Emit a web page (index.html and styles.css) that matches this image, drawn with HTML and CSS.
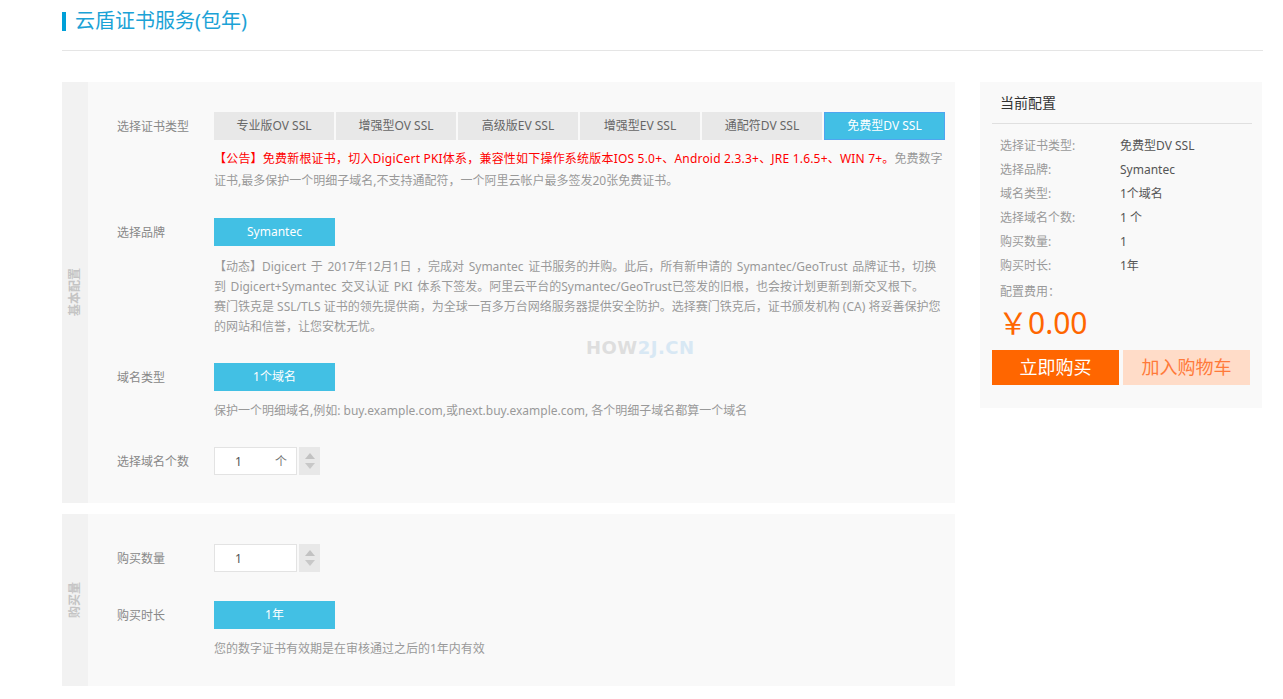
FILE: index.html
```html
<!DOCTYPE html>
<html lang="zh-CN">
<head>
<meta charset="utf-8">
<title>云盾证书服务(包年)</title>
<link rel="stylesheet" href="styles.css">
</head>
<body>
<div class="page">
  <div class="header"><span class="header-bar"></span><h1 class="title">云盾证书服务(包年)</h1></div>
  <div class="main">
    <div class="left">
      <div class="panel">
        <div class="strip"><span class="strip-text">基本配置</span></div>
        <div class="content">
          <div class="row">
            <div class="label">选择证书类型</div>
            <div class="tabs">
              <div class="tab">专业版OV SSL</div>
              <div class="tab">增强型OV SSL</div>
              <div class="tab">高级版EV SSL</div>
              <div class="tab">增强型EV SSL</div>
              <div class="tab">通配符DV SSL</div>
              <div class="tab tab-active">免费型DV SSL</div>
            </div>
          </div>
          <p class="desc notice"><span class="red">【公告】免费新根证书，切入DigiCert PKI体系，兼容性如下操作系统版本IOS 5.0+、Android 2.3.3+、JRE 1.6.5+、WIN 7+。</span>免费数字证书,最多保护一个明细子域名,不支持通配符，一个阿里云帐户最多签发20张免费证书。</p>

          <div class="row row-gap">
            <div class="label">选择品牌</div>
            <div class="btn">Symantec</div>
          </div>
          <p class="desc dyn">【动态】Digicert 于 2017年12月1日 ，完成对 Symantec 证书服务的并购。此后，所有新申请的 Symantec/GeoTrust 品牌证书，切换到 Digicert+Symantec 交叉认证 PKI 体系下签发。阿里云平台的Symantec/GeoTrust已签发的旧根，也会按计划更新到新交叉根下。<br><span class="dyn2">赛门铁克是 SSL/TLS 证书的领先提供商，为全球一百多万台网络服务器提供安全防护。选择赛门铁克后，证书颁发机构 (CA) 将妥善保护您的网站和信誉，让您安枕无忧。</span></p>

          <div class="row row-gap">
            <div class="label">域名类型</div>
            <div class="btn">1个域名</div>
          </div>
          <p class="desc hint">保护一个明细域名,例如: buy.example.com,或next.buy.example.com, 各个明细子域名都算一个域名</p>

          <div class="row row-gap">
            <div class="label">选择域名个数</div>
            <div class="num">
              <div class="num-box"><span class="num-val">1</span><span class="num-unit">个</span></div>
              <div class="spin"><span class="tri-up"></span><span class="tri-down"></span></div>
            </div>
          </div>
          <div class="watermark">HOW<span class="wm-blue">2J.CN</span></div>
        </div>
      </div>

      <div class="panel panel2">
        <div class="strip"><span class="strip-text">购买量</span></div>
        <div class="content">
          <div class="row">
            <div class="label">购买数量</div>
            <div class="num">
              <div class="num-box"><span class="num-val">1</span></div>
              <div class="spin"><span class="tri-up"></span><span class="tri-down"></span></div>
            </div>
          </div>
          <div class="row row-gap2">
            <div class="label">购买时长</div>
            <div class="btn">1年</div>
          </div>
          <p class="desc hint">您的数字证书有效期是在审核通过之后的1年内有效</p>
        </div>
      </div>
    </div>

    <div class="side">
      <div class="side-title">当前配置</div>
      <div class="side-rows">
        <div class="srow"><span class="skey">选择证书类型:</span><span class="sval">免费型DV SSL</span></div>
        <div class="srow"><span class="skey">选择品牌:</span><span class="sval">Symantec</span></div>
        <div class="srow"><span class="skey">域名类型:</span><span class="sval">1个域名</span></div>
        <div class="srow"><span class="skey">选择域名个数:</span><span class="sval">1 个</span></div>
        <div class="srow"><span class="skey">购买数量:</span><span class="sval">1</span></div>
        <div class="srow"><span class="skey">购买时长:</span><span class="sval">1年</span></div>
        <div class="srow fee"><span class="skey">配置费用：</span></div>
      </div>
      <div class="price">￥0.00</div>
      <div class="actions">
        <div class="buy">立即购买</div>
        <div class="cart">加入购物车</div>
      </div>
    </div>
  </div>
</div>
</body>
</html>
```

FILE: styles.css
```css
* { box-sizing: border-box; }
html, body { margin: 0; padding: 0; background: #fff; }
body {
  font-family: "Noto Sans", "Noto Sans CJK SC", sans-serif;
  font-size: 12px;
  color: #666;
}
.page { padding-left: 62px; width: 1263px; }
.header {
  display: flex;
  align-items: center;
  padding: 10px 0 18px;
  border-bottom: 1px solid #e5e5e5;
}
.header-bar { width: 4px; height: 19px; background: #00a0d8; margin-right: 9px; }
.title { margin: 0; font-weight: normal; font-size: 20px; line-height: 22px; color: #1ba2d6; }

.main { display: flex; margin-top: 31px; gap: 25px; align-items: flex-start; }
.left { width: 893px; display: flex; flex-direction: column; gap: 11px; }
.panel { display: flex; background: #f9f9f9; }
.strip {
  width: 26px;
  background: #f2f2f2;
  display: flex;
  align-items: center;
  justify-content: center;
}
.strip-text {
  writing-mode: vertical-rl;
  text-orientation: sideways;
  transform: rotate(180deg);
  font-size: 12px;
  font-weight: bold;
  color: #c4c4c4;
  line-height: 14px;
}
.content { position: relative; flex: 1; padding: 30px 10px 28px 29px; }
.panel2 .content { padding-bottom: 27px; }
.row { display: flex; align-items: center; height: 28px; }
.row-gap { margin-top: 26px; }
.row-gap2 { margin-top: 29px; }
.label { width: 97px; color: #888; font-size: 12px; }
.tabs { display: flex; gap: 2px; }
.tab {
  width: 120px;
  height: 28px;
  line-height: 28px;
  text-align: center;
  background: #e8e8e8;
  color: #666;
}
.tab-active { background: #42bfe5; color: #fff; border: 1px solid #4fa5f0; line-height: 26px; width: 121px; }
.desc { margin: 0 0 0 97px; color: #999; }
.notice { margin-top: 8px; line-height: 22px; }
.red { color: #ff0000; letter-spacing: 0.2px; }
.dyn { margin-top: 11px; line-height: 20px; word-spacing: 1.5px; }
.dyn2 { word-spacing: 0; }
.hint { margin-top: 10px; line-height: 20px; }
.btn {
  width: 121px;
  height: 28px;
  line-height: 28px;
  text-align: center;
  background: #42c0e4;
  color: #fff;
}
.num { display: flex; gap: 2px; }
.num-box {
  width: 83px;
  height: 28px;
  background: #fff;
  border: 1px solid #e3e3e3;
  display: flex;
  align-items: center;
  padding-left: 20px;
  color: #555;
}
.num-val { width: 40px; }
.num-unit { color: #777; }
.spin {
  width: 21px;
  height: 28px;
  background: #e8e8e8;
  display: flex;
  flex-direction: column;
  align-items: center;
  justify-content: center;
  gap: 4px;
}
.tri-up { width: 0; height: 0; border-left: 5px solid transparent; border-right: 5px solid transparent; border-bottom: 6px solid #c2c2c2; }
.tri-down { width: 0; height: 0; border-left: 5px solid transparent; border-right: 5px solid transparent; border-top: 6px solid #c8c8c8; }
.watermark {
  position: absolute;
  left: 498px;
  top: 255px;
  font-size: 18px;
  font-weight: bold;
  letter-spacing: 0.5px;
  color: #dedede;
  font-family: "DejaVu Sans", sans-serif;
}
.wm-blue { color: #d8e8f4; }

.side { width: 282px; background: #f9f9f9; padding: 0 10px 23px 12px; }
.side-title {
  font-size: 14px;
  line-height: 22px;
  padding: 10px 0 9px 8px;
  color: #333;
  border-bottom: 1px solid #e0e0e0;
}
.side-rows { padding: 10px 0 0 8px; }
.srow { display: flex; line-height: 24px; height: 24px; }
.skey { width: 120px; color: #999; }
.sval { color: #555; }
.fee { margin-top: 2px; }
.price { font-size: 30px; line-height: 36px; color: #ff6600; padding-left: 6px; margin-top: 1px; }
.actions { display: flex; gap: 4px; margin-top: 9px; }
.buy, .cart { width: 127px; height: 35px; line-height: 35px; text-align: center; font-size: 18px; }
.buy { background: #ff6600; color: #fff; }
.cart { background: #ffdcc8; color: #ff7a3a; }
```
